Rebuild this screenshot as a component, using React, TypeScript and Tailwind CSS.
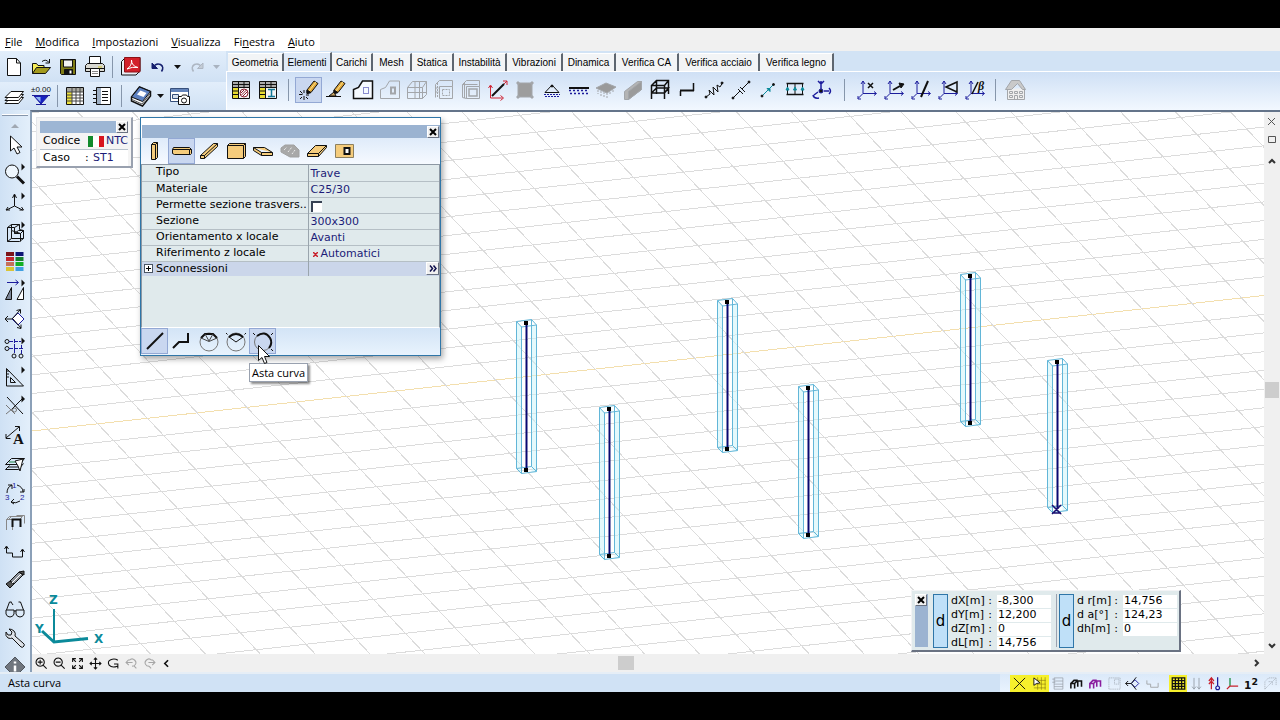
import type { ReactNode } from "react";
import { clsx } from "clsx";

const GRID = "#dcdcdc";
const NAVY = "#1c1c9c";
const TEAL = "#0b8a9a";
const GRAY = "#a3a6aa";

function Glyph({
  children,
  size = 24,
  color = "#111",
}: {
  children: ReactNode;
  size?: number;
  color?: string;
}) {
  return (
    <svg
      aria-hidden="true"
      className="block shrink-0"
      fill="none"
      height={size}
      stroke={color}
      viewBox="0 0 24 24"
      width={size}
    >
      {children}
    </svg>
  );
}

function ToolButton({
  label,
  children,
  active = false,
  className,
}: {
  label: string;
  children: ReactNode;
  active?: boolean;
  className: string;
}) {
  return (
    <button
      aria-label={label}
      aria-pressed={active}
      className={clsx(
        "flex shrink-0 items-center justify-center",
        active && "bg-[#c9d7f0] outline outline-1 -outline-offset-1 outline-[#93a8d4]",
        className
      )}
      type="button"
    >
      {children}
    </button>
  );
}

function Separator({ className }: { className: string }) {
  return (
    <span className={clsx("flex shrink-0 justify-center", className)}>
      <span className="h-[22px] w-px bg-[#8696ab]" />
    </span>
  );
}

function CloseBox({ className }: { className?: string }) {
  return (
    <button
      aria-label="Chiudi"
      className={clsx(
        "flex size-3 shrink-0 items-center justify-center border border-white border-r-gray-500 border-b-gray-500 bg-[#f0f0f0]",
        className
      )}
      type="button"
    >
      <svg fill="none" height="8" stroke="#000" strokeWidth="2" viewBox="0 0 8 8" width="8">
        <path d="M1 1l6 6M7 1l-6 6" />
      </svg>
    </button>
  );
}

const DownArrow = ({ color = "#111" }: { color?: string }) => (
  <svg className="block" fill={color} height="4" viewBox="0 0 7 4" width="7">
    <path d="M0 0h7L3.5 4z" />
  </svg>
);

/* ---------- standard toolbar ---------- */

const newIcon = (
  <Glyph>
    <path d="M5.5 3.5h9l4 4.5v12.500h-13z" fill="#fff" />
    <path d="M14.500 3.500v4.500h4" />
  </Glyph>
);
const openIcon = (
  <Glyph>
    <path d="M3.500 18.500V8.500h4l1.500 2h6v3" fill="#f6ee5a" />
    <path d="M3.500 18.500l4-6h14l-5 6z" fill="#a39a1c" />
    <path d="M13 6.500q4-3 7 1M20.500 4v4h-4" />
  </Glyph>
);
const saveIcon = (
  <Glyph>
    <path d="M4.500 4.500h15v15h-14l-1-1z" fill="#7f7c14" />
    <path d="M7.500 5h9v7h-9z" fill="#f3f3ef" />
    <path d="M8.500 14.500h8v5h-8z" fill="#111" />
    <path d="M13.500 15.500h2v3h-2z" fill="#fff" stroke="none" />
  </Glyph>
);
const printIcon = (
  <Glyph>
    <path d="M6.500 10V1.500h11V10" fill="#fff" />
    <path d="M2.500 10.500l2-2h15l2 2v6h-19z" fill="#d9d9d2" />
    <path d="M3 13.500h18" />
    <path d="M7.500 13.500h9v8h-9z" fill="#fff" />
    <path d="M9 16.500h6M9 18.500h6" stroke="#888" />
    <path d="M15 12h4" stroke="#c9c224" />
  </Glyph>
);
const pdfIcon = (
  <Glyph>
    <path d="M2.500 6.500l4-4h14.500v13.500l-4 4H2.500z" fill="#e9eef5" />
    <path d="M5.500 2.500h15.500v14.500H5.500z" fill="#d3202a" stroke="#8c1218" />
    <path d="M8 14q5-3 4.500-9q0 6 6.500 7.500q-6-1-11 1.500z" stroke="#fff" />
  </Glyph>
);
const undoIcon = (
  <Glyph color="#16206e">
    <path d="M7 12.500q3-5 7.500-3q4 2.500 1 7" strokeWidth="1.500" />
    <path d="M6 8v5.500h5.500z" fill="#16206e" />
  </Glyph>
);
const redoIcon = (
  <Glyph color="#adb6c2">
    <path d="M17 12.500q-3-5-7.500-3q-4 2.500-1 7" strokeWidth="1.500" />
    <path d="M18 8v5.500h-5.500z" fill="#c4ccd6" />
  </Glyph>
);
const layersIcon = (
  <Glyph>
    <path d="M3 19.500l6-6h12.500l-5 6z" fill="#fff" />
    <path d="M3 16.500l6-6h12.500l-5 6z" fill="#fff" />
    <path d="M3 13.500l6-6h12.500l-5 6z" fill="#fff" />
  </Glyph>
);
const levelIcon = (
  <Glyph>
    <text fill="#111" fontFamily="Liberation Sans" fontSize="8" stroke="none" x="2" y="8">
      ±0.00
    </text>
    <path d="M3 11.500h18M7 20.500h10" stroke={NAVY} />
    <path d="M5 12h14l-7 8z" fill="#1622c4" stroke={NAVY} />
    <path d="M6.500 13h5v5z" fill="#8fb6f0" stroke="none" />
  </Glyph>
);
const tableIcon = (
  <Glyph>
    <path d="M3.500 3.500h17v17h-17z" fill="#fff" />
    <path d="M4 4h16v4H4z" fill="#a8a8a0" stroke="none" />
    <path d="M4 8h5v12H4z" fill="#eee23c" stroke="none" />
    <path d="M3.500 8h17M3.500 11h17M3.500 14h17M3.500 17h17M9 3.500v17M13 3.500v17M17 3.500v17" stroke="#444" />
  </Glyph>
);
const notebookIcon = (
  <Glyph>
    <path d="M6.500 3.500h14v17h-14z" fill="#fff" />
    <path d="M7 4h4v16h-4z" fill="#9fb0c4" stroke="none" />
    <path d="M3 6.500h4M3 10.500h4M3 14.500h4M3 18.500h4M12 7.500h6M12 10.500h6M12 13.500h6M12 16.500h6" />
  </Glyph>
);
const bookIcon = (
  <Glyph>
    <path d="M2.500 13l8-10 11 4.500v4.500l-8 10-11-5z" fill="#fff" strokeWidth="1.500" />
    <path d="M2.500 13l8-10 11 4.500-8 10z" fill="#5c80c0" />
    <path d="M8 10.500l3.500-4 6 2.500-3 4z" fill="#fff" stroke="none" />
    <path d="M3 15.500l10 4.500 8-10" stroke="#555" />
  </Glyph>
);
const snapshotIcon = (
  <Glyph>
    <path d="M2.500 4.500h18v13h-18z" fill="#fff" stroke="#37507c" />
    <path d="M3 5h17v3H3z" fill="#6384bb" stroke="none" />
    <path d="M4.500 10.500h6v4h-6z" fill="#d5e0ef" stroke="#37507c" />
    <path d="M10.500 12.500h3l1-1.500h4l1 1.500h2v8h-11z" fill="#fff" />
    <circle cx="16" cy="16.500" r="2.500" />
  </Glyph>
);

/* ---------- "Elementi" toolbar ---------- */

const sheetBase = (
  <>
    <path d="M3.500 3.500h17v17h-17z" fill="#f4f4f4" />
    <path d="M4 4h16v5H4z" fill="#aaa" stroke="none" />
    <path d="M4 9h5v11H4z" fill="#e8dc32" stroke="none" />
    <path d="M3.500 6.500h17M3.500 9.500h17M3.500 13h6M3.500 16.500h6M9.500 3.500v17M15 3.500v6" />
  </>
);

const axes = (
  <path d="M2 20.500l5-5V3M7 15.500h13M5 6l2-3 2 3M18 13.500l2.500 2-2.500 2M2 18v3h3" stroke={NAVY} />
);

const pencil = (
  <>
    <path d="M10 12l7-9 4 2.500-7 9-4 1z" fill="#e2a83a" />
    <path d="M12 13l7-9" stroke="#f8e28c" />
    <path d="M10 12v3.500l4-1z" fill="#111" />
  </>
);

const sheetHatchIcon = (
  <Glyph>
    {sheetBase}
    <circle cx="15" cy="15" fill="#fff" r="4" stroke="#8c2030" />
    <path d="M12.500 17l5-5M14 18l4-4M12 15l3-3" stroke="#8c2030" />
  </Glyph>
);
const sheetBeamIcon = (
  <Glyph>
    {sheetBase}
    <path d="M12 11.500h7M12 18.500h7M15.500 11.500v7" stroke="#147898" strokeWidth="1.500" />
  </Glyph>
);
const drawIcon = (
  <Glyph>
    {pencil}
    <path d="M7 12v3M7 18v4M2 16.500h3.500M9 17h3M3 13l2.500 2.500M9 19l2 2M5 19l-2 2" />
  </Glyph>
);
const editIcon = (
  <Glyph>
    {pencil}
    <path d="M2 18.500h15M5 18l5-4 2 4z" fill="#c9a460" />
  </Glyph>
);
const shapeIcon = (
  <Glyph>
    <path d="M2.500 20.500v-9l5-2 4-6.500h10v17.500z" fill="#f6faff" strokeWidth="1.500" />
    <path d="M12.500 9.500h5v6h-5z" stroke={NAVY} strokeDasharray="1 1" />
  </Glyph>
);
const shapeHoleIcon = (
  <Glyph color={GRAY}>
    <path d="M2.500 20.500v-9l5-2 4-6.500h10v17.500z" />
    <path d="M13 9.500h4v6h-4z" strokeWidth="2" />
  </Glyph>
);
const splitIcon = (
  <Glyph color={GRAY}>
    <path d="M2.500 9.500h15v11h-15zM7.500 3.500h14v13M2.500 9.500l5-6M17.500 9.500l4-6M17.500 20.500l4-4M10 3v17M3 14.500h18M14.500 4v16" />
  </Glyph>
);
const solidDotIcon = (
  <Glyph color={GRAY}>
    <path d="M7.500 8.500h13v12h-13zM3.500 6.500l4-4h13v6M3.500 6.500v13" />
    <path d="M10.500 11.500h7v6h-7zM5.500 5v15M3.500 10h4M3.500 14h4" strokeDasharray="2 1" />
  </Glyph>
);
const solidIcon = (
  <Glyph color={GRAY}>
    <path d="M7.500 8.500h13v12h-13zM3.500 6.500l4-4h13v6M3.500 6.500v13l4 1M5.500 5v15M3.500 6.500h15" />
    <path d="M10 11h8v7h-8z" strokeWidth="1.500" />
  </Glyph>
);
const lineAxesIcon = (
  <Glyph>
    <path d="M6 18L18 6" strokeWidth="2" />
    <path d="M17 3h4v4M21 3l-3 3M4.500 8v12h12M2.500 10l2-3 2 3M14.500 17.500l3 2.500-3 2.500" stroke="#cf2435" />
  </Glyph>
);
const patchIcon = (
  <Glyph color={GRAY}>
    <path d="M5 5h14v14H5z" fill="#9d9d9d" />
    <path d="M4 4h2v2H4zM18 4h2v2h-2zM4 18h2v2H4zM18 18h2v2h-2z" fill={GRAY} />
  </Glyph>
);
const supportIcon = (
  <Glyph>
    <path d="M5 14.500h14L12 7z" />
    <circle cx="12" cy="8" fill="#111" r="1" />
    <path d="M4 16.500h16M5 18.500h14" stroke={NAVY} strokeDasharray="2 1" />
  </Glyph>
);
const lineSupportIcon = (
  <Glyph>
    <path d="M2 10h20" strokeWidth="2" />
    <path d="M2 12.500h20M3 15.500h19" stroke={NAVY} strokeDasharray="2 2" strokeWidth="1.500" />
  </Glyph>
);
const surfaceIcon = (
  <Glyph color={GRAY}>
    <path d="M2 10l10-5 10 4-9 6z" fill="#9a9a9a" />
    <path d="M4 12v4M7 13v5M10 14v5M13 15v5M16 14v3M19 12v3" strokeDasharray="2 1" />
  </Glyph>
);
const wallIcon = (
  <Glyph color={GRAY}>
    <path d="M3.500 13.500l13-10h4v8l-13 10h-4z" fill="#b4b4b4" />
    <path d="M7.500 13.500l13-10v8l-13 10z" fill="#9b9b9b" />
  </Glyph>
);
const frameIcon = (
  <Glyph>
    <path d="M3.500 21V7.500l5-5h12V16M16.500 21V7.500M8.500 2.500V16M3.500 7.500h13l4-5M3.500 15h13l4-5h-12l-5 5" strokeWidth="1.500" />
  </Glyph>
);
const offsetIcon = (
  <Glyph>
    <path d="M5 12.500h14" strokeWidth="2" />
    <path d="M5.500 13v5M18.500 5v8" strokeWidth="1.500" />
  </Glyph>
);
const springIcon = (
  <Glyph>
    <path d="M4 19l4-3-1-4 5 5-1-8 5 5-1-7 3 2 3-5" />
    <circle cx="4" cy="19" fill="#111" r="1" />
    <circle cx="20" cy="5" fill="#111" r="1" />
  </Glyph>
);
const gapIcon = (
  <Glyph>
    <path d="M4 20l7-7M13 11l7-7M9 11l5 5M11 9l5 5" />
    <circle cx="4" cy="20" fill="#111" r="1" />
    <circle cx="20" cy="4" fill="#111" r="1" />
  </Glyph>
);
const linkIcon = (
  <Glyph>
    <path d="M6 18L17 7" stroke={TEAL} />
    <path d="M11 10.500h3v3z" fill={TEAL} stroke={TEAL} />
    <circle cx="6" cy="18" fill="#111" r="1" />
    <circle cx="17.500" cy="6.500" fill="#111" r="1" />
  </Glyph>
);
const loadGridIcon = (
  <Glyph>
    <path d="M3.500 5.500h17M3.500 16.500h17" strokeWidth="1.500" />
    <path d="M4.500 5v12M12 5v12M19.500 5v12" />
    <path d="M3 12l1.500-3L6 12zM10.500 12l1.500-3 1.500 3zM18 12l1.500-3 1.500 3z" fill={TEAL} stroke={TEAL} />
  </Glyph>
);
const massIcon = (
  <Glyph color={NAVY}>
    <circle cx="11" cy="13" fill="#111" r="2" />
    <path d="M11 3v8M8 3l3 3 3-3M14 13h5M19 10q3 3 0 6M8 14l-4 3M3 17q1 4 6 3" strokeWidth="1.500" />
  </Glyph>
);
const axisXIcon = (
  <Glyph>
    {axes}
    <path d="M12 5l5 5M17 5l-5 5" strokeWidth="1.500" />
  </Glyph>
);
const axisArrowIcon = (
  <Glyph>
    {axes}
    <path d="M10 12l7-4" strokeWidth="2" />
    <path d="M16 5l5 1-3 4z" fill="#111" />
  </Glyph>
);
const axisLineIcon = (
  <Glyph>
    {axes}
    <path d="M11 19l7-16" strokeWidth="2" />
  </Glyph>
);
const axisPlaneIcon = (
  <Glyph>
    {axes}
    <path d="M9 9l11-5v10z" strokeWidth="1.500" />
  </Glyph>
);
const axisBetaIcon = (
  <Glyph>
    {axes}
    <path d="M8 16l6-12" strokeWidth="1.500" />
    <text fill="#111" fontFamily="Liberation Serif" fontSize="12" fontStyle="italic" fontWeight="bold" stroke="none" x="14" y="12">
      β
    </text>
  </Glyph>
);
const buildingIcon = (
  <Glyph color={GRAY}>
    <path d="M4.500 11v10.500h17V10" fill="#efefef" />
    <path d="M2.500 11.500l6-9h8l6 9h-3l-5-6-6 6z" fill="#c9c9c9" />
    <path d="M6.500 13.500h3v2h-3zM11.500 13.500h3v2h-3zM16.500 13.500h3v2h-3zM6.500 17.500h3v2h-3zM11.500 17.500h3v4h-3zM16.500 17.500h3v2h-3z" />
  </Glyph>
);

const elementTools: { label: string; icon: ReactNode; active?: boolean }[] = [
  { label: "Disegna", icon: drawIcon, active: true },
  { label: "Modifica elemento", icon: editIcon },
  { label: "Contorno", icon: shapeIcon },
  { label: "Foro", icon: shapeHoleIcon },
  { label: "Dividi", icon: splitIcon },
  { label: "Solaio tratteggiato", icon: solidDotIcon },
  { label: "Solaio", icon: solidIcon },
  { label: "Asse locale", icon: lineAxesIcon },
  { label: "Area", icon: patchIcon },
  { label: "Vincolo", icon: supportIcon },
  { label: "Vincolo lineare", icon: lineSupportIcon },
  { label: "Vincolo superficiale", icon: surfaceIcon },
  { label: "Parete", icon: wallIcon },
  { label: "Telaio", icon: frameIcon },
  { label: "Offset", icon: offsetIcon },
  { label: "Molla", icon: springIcon },
  { label: "Gap", icon: gapIcon },
  { label: "Link", icon: linkIcon },
  { label: "Impalcato", icon: loadGridIcon },
  { label: "Massa", icon: massIcon },
];

const axisTools = [
  { label: "Asse x", icon: axisXIcon },
  { label: "Asse vettore", icon: axisArrowIcon },
  { label: "Asse linea", icon: axisLineIcon },
  { label: "Asse piano", icon: axisPlaneIcon },
  { label: "Angolo beta", icon: axisBetaIcon },
];

const tabs = [
  { label: "Geometria", width: "w-14" },
  { label: "Elementi", width: "w-12", active: true },
  { label: "Carichi", width: "w-[41px]" },
  { label: "Mesh", width: "w-[39px]" },
  { label: "Statica", width: "w-[42px]" },
  { label: "Instabilità", width: "w-[53px]" },
  { label: "Vibrazioni", width: "w-14" },
  { label: "Dinamica", width: "w-[53px]" },
  { label: "Verifica CA", width: "w-[63px]" },
  { label: "Verifica acciaio", width: "w-[81px]" },
  { label: "Verifica legno", width: "w-[74px]" },
];

/* ---------- left toolbar ---------- */

const flyout = <path d="M18.500 1.500v7l3.500-3.500z" fill="#111" stroke="none" />;

const sideTools: { label: string; icon: ReactNode }[] = [
  {
    label: "Seleziona",
    icon: <path d="M7.500 3v15l3.500-3 3 6 3-1.500-3-5.500h5z" fill="#fff" />,
  },
  {
    label: "Zoom",
    icon: (
      <>
        <circle cx="9" cy="9.500" fill="#eef6fd" r="6.500" />
        <path d="M14 14.500l7 7" strokeWidth="3" />
        {flyout}
      </>
    ),
  },
  {
    label: "Viste",
    icon: (
      <>
        <path d="M11.500 15V4M9.500 7l2-4 2 4M11.500 15l-8 4M11.500 15l8 4M7 19H3l2-3M16.500 19h4l-2-3" />
        {flyout}
      </>
    ),
  },
  {
    label: "Parti",
    icon: (
      <>
        <path d="M4.500 7.500l4-3h8v5l4 1v8l-4 3h-12zM4.500 7.500h7v6h6v8M8.500 4.500v6l9 3 3-3M8.500 10.500v8h12M4.500 21.500l4-3M11.500 7.500l5-3M11.500 13.500l4-3h5" />
        {flyout}
      </>
    ),
  },
  {
    label: "Colori",
    icon: (
      <g stroke="none">
        <path d="M3 3h8v4H3z" fill="#7c1418" />
        <path d="M12.500 3h8v4h-8z" fill="#0c1474" />
        <path d="M3 8h8v4H3z" fill="#c3272d" />
        <path d="M12.500 8h8v4h-8z" fill="#18802c" />
        <path d="M3 13h8v4H3z" fill="#c4705c" />
        <path d="M12.500 13h8v4h-8z" fill="#12b024" />
        <path d="M3 18h8v4H3z" fill="#d9c436" />
        <path d="M12.500 18h8v4h-8z" fill="#3f9fe0" />
      </g>
    ),
  },
  {
    label: "Specchia",
    icon: (
      <>
        <path d="M4 4.500h11M12.500 2l3 2.500-3 2.500" stroke={NAVY} />
        <path d="M8.500 9.500v12h-6z" fill="#7c8698" />
        <path d="M20.500 9.500v12h-6.500z" fill="#fff" />
        {flyout}
      </>
    ),
  },
  {
    label: "Ruota",
    icon: (
      <>
        <path d="M9 12l6-6 6 6-6 6z" fill="#fff" stroke={NAVY} />
        <path d="M9 12H2M5 9l-3 3 3 3M9 12l8-9M13.500 3.500l4-1v4M10 12l8 9M14 20.500l4 1v-4" />
      </>
    ),
  },
  {
    label: "Griglia",
    icon: (
      <>
        <circle cx="4" cy="5.500" r="2" />
        <circle cx="4" cy="12.500" r="2" />
        <circle cx="11" cy="20" r="2" />
        <circle cx="18" cy="20" r="2" />
        <path d="M6 5.500h12M6 12.500h15M11.500 3v15M18.500 9v9" stroke={NAVY} strokeDasharray="4 1" />
        {flyout}
      </>
    ),
  },
  {
    label: "Squadra",
    icon: (
      <>
        <path d="M3.500 3.500v17.500h17z" />
        <path d="M7.500 12.500v5h5z" />
        <path d="M4 6h2M4 9h2M4 12h2" />
        {flyout}
      </>
    ),
  },
  {
    label: "Intersezione",
    icon: (
      <>
        <path d="M4 3l16 17M9 15L20 4" />
        <path d="M3 11l9 9M3 20l6-5" stroke="#777" />
        <circle cx="11.500" cy="16" r="2" stroke="#777" />
        {flyout}
      </>
    ),
  },
  {
    label: "Quote",
    icon: (
      <>
        <path d="M3 15L16 4M3 11v4.500h4.500M12 3.500h4.500V8" />
        <text fill="#111" fontFamily="Liberation Serif" fontSize="15" fontWeight="bold" stroke="none" x="10" y="21">
          A
        </text>
      </>
    ),
  },
  {
    label: "Piani di lavoro",
    icon: (
      <>
        <path d="M2.500 12.500l6-6h13l-5 6zM2.500 17.500l4-4M2.500 17.500h13l5-6M5 15h13" />
        <path d="M6 10h13" stroke="#238644" />
        <path d="M12 9l8-2-3 12-2-5z" fill="#fff" />
      </>
    ),
  },
  {
    label: "Rinumera",
    icon: (
      <>
        <path d="M4 12q0-6 5-8M14 4q6 2 6 7M17 20q-4 3-9 1M5 4h4v4M17 11h4V8M11 18l-3 3 3 2" />
        <g fill={NAVY} fontFamily="Liberation Sans" fontSize="8" stroke="none">
          <text x="9" y="7">1</text>
          <text x="2" y="19">3</text>
          <text x="17" y="19">2</text>
        </g>
      </>
    ),
  },
  {
    label: "Parti strutturali",
    icon: (
      <>
        <path d="M3.500 20V9.500h6V20M6 9l3-3M3.500 9.500l3-3h13l-3 3M13.500 5.500h8v8" stroke="#888" />
        <path d="M9.500 17V9.500h8V17" strokeWidth="2" />
      </>
    ),
  },
  {
    label: "Percorso",
    icon: <path d="M3.500 8v6h6v4h10v-7M1.500 10l2-3 2 3M17.500 13l2-3 2 3" />,
  },
  {
    label: "Evidenzia",
    icon: (
      <>
        <path d="M7 13l9-9 4 3-9 9z" fill="#8e949c" />
        <path d="M16 4l5-1v4zM3 16l4-3 4 3-4 4z" fill="#555" />
        <path d="M9 15L18 6" stroke="#fff" />
      </>
    ),
  },
  {
    label: "Occhiali",
    icon: (
      <path d="M3 13h8v4q-1 3-4 3t-4-3zM13 13h8v4q-1 3-4 3t-4-3zM11 14h2M3.500 13l3-8h2M20.500 13l-3-8h-2M8 5l2 3" />
    ),
  },
  {
    label: "Opzioni",
    icon: (
      <path d="M6 3l3 3-1 3-3 0-2-3q-1 4 2 6 3 1 4 0l9 9q2 1 3-1t-1-3l-8-7q1-3-1-5T6 3z" fill="#dfe4ea" />
    ),
  },
  {
    label: "Informazioni",
    icon: (
      <>
        <path d="M12 2l10 10-10 10L2 12z" fill="#70767e" stroke="#50565e" />
        <path d="M12 10.500v6M12 6.500v2" stroke="#fff" strokeWidth="2.500" />
      </>
    ),
  },
];

/* ---------- model view ---------- */

const shallowLines = Array.from({ length: 38 }, (_, i) => 431 + (i - 18) * 18.72);
const steepLines = Array.from({ length: 33 }, (_, i) => 462 + (i - 18) * 54.9);

const columns = [
  { x: 526, y: 323 },
  { x: 609, y: 409 },
  { x: 727, y: 302 },
  { x: 808, y: 388 },
  { x: 970, y: 276 },
  { x: 1057, y: 362, origin: true },
];

function Column({ x, y, origin = false }: { x: number; y: number; origin?: boolean }) {
  return (
    <g transform={`translate(${x} ${y})`}>
      <path d="M-9.500-1.500V146.500l5 5V3.500zM5.500 2.500v147h5V3z" fill="#c9f3fa" fillOpacity="0.500" />
      <path
        d="M-9.500-1.500l15-2 5 5.500-15 2zM-9.500-1.500v147l5 5 15-2V2M-4.500 3.500v147M5.500-3.500v147l5 5M-9.500 145.500l15-2"
        fill="none"
        stroke="#62b6d8"
      />
      <path d="M.5 0v147" stroke="#080870" strokeWidth="2" />
      <path d="M-2-2h4v4h-4z" fill="#000" />
      {origin ? (
        <path d="M-5 143l9 9M4 143l-9 9M-5 151h9" fill="none" stroke="#1a0f70" strokeWidth="1.500" />
      ) : (
        <path d="M-2 145h4v4h-4z" fill="#000" />
      )}
    </g>
  );
}

function ModelView() {
  return (
    <svg
      aria-label="Modello"
      className="absolute inset-0 size-full bg-white"
      preserveAspectRatio="xMinYMin slice"
      role="img"
      viewBox="32 112 1232 542"
    >
      <g shapeRendering="crispEdges">
        {shallowLines.map((y, i) => (
          <line key={y} stroke={i === 18 ? "#f3dfae" : GRID} x1={32} x2={1264} y1={y} y2={y - 135.5} />
        ))}
        {steepLines.map((x) => (
          <line key={x} stroke={GRID} x1={x} x2={x + 512} y1={112} y2={654} />
        ))}
      </g>
      {columns.map((c) => (
        <Column key={c.x} {...c} />
      ))}
      <g fill="none" stroke={TEAL} strokeWidth="2">
        <path d="M54 609v32" />
        <path d="M42 631l12 11 34-3.500" strokeWidth="3" />
      </g>
      <g fill={TEAL} fontFamily="DejaVu Sans" fontSize="12" fontWeight="bold">
        <text x="49" y="604">Z</text>
        <text x="35" y="633">Y</text>
        <text x="94" y="643">X</text>
      </g>
    </svg>
  );
}

/* ---------- floating panels ---------- */

function InfoPanel() {
  return (
    <section className="absolute top-[5px] left-1 w-[97px] border border-gray-200 border-r-2 border-r-gray-400 border-b-2 border-b-gray-400 bg-[#f4f4f4] px-[3px] pt-[3px] text-[11px] leading-4">
      <div className="flex bg-[#9db6d4]">
        <CloseBox className="ml-auto" />
      </div>
      <div className="flex items-center border-[#b9c3cc] border-b pl-[3px]">
        <span className="w-[45px]">Codice</span>
        <svg className="h-[11px] w-4" viewBox="0 0 16 11">
          <path d="M0 0h5v11H0z" fill="#118a2c" />
          <path d="M5 0h6v11H5z" fill="#fff" />
          <path d="M11 0h5v11h-5z" fill="#d8141c" />
        </svg>
        <span className="pl-0.5 text-[#1c1c78]">NTC</span>
      </div>
      <div className="flex bg-white pl-[3px]">
        <span className="w-[42px]">Caso</span>
        <span className="w-2">:</span>
        <span className="text-[#1c1c78]">ST1</span>
      </div>
    </section>
  );
}

const solid = "#f5cc7c";

const elementTypes = [
  { label: "Pilastro", icon: <path d="M8.500 5.500l2-2h4v15l-2 2h-4zM8.500 5.500h4v15M12.500 5.500l2-2" fill={solid} /> },
  { label: "Trave", active: true, icon: <path d="M2.500 10.500l1-2h16l2 2v4l-1 1h-16l-2-1zM2.500 10.500h17v5M19.500 10.500l2 0" fill={solid} /> },
  { label: "Trave inclinata", icon: <path d="M3.500 16.500l13-12h4v3l-13 12h-4zM3.500 16.500h4v3M7.500 16.500l13-12" fill={solid} /> },
  { label: "Parete", icon: <path d="M3.500 6.500l2-2h16v13l-2 2h-16zM3.500 6.500h16v13M19.500 6.500l2-2" fill={solid} /> },
  { label: "Soletta", icon: <path d="M2.500 8.500h11l8 5v3h-11l-8-5zM2.500 8.500l8 5h11M10.500 13.500v3" fill={solid} /> },
  {
    label: "Pendio",
    icon: (
      <>
        <path d="M3 9l4-3h9l5 5v7h-9l-9-5z" fill="#a8a8a8" stroke="#a0a0a0" />
        <path d="M6 11l3-3M10 13l4-5M14 15l3-4" stroke="#fff" strokeDasharray="1 1" />
      </>
    ),
  },
  { label: "Falda", icon: <path d="M2.500 14.500l8-8h11v2l-8 9h-11zM2.500 14.500h11v3M13.500 14.500l8-8" fill={solid} /> },
  {
    label: "Apertura",
    icon: (
      <>
        <path d="M3.500 5.500h18v13h-18z" fill={solid} stroke="#8c8060" />
        <path d="M12.500 9h5v6h-5z" fill="#fff" strokeWidth="2" />
      </>
    ),
  },
];

const drawModes = [
  { label: "Asta", active: true, icon: <path d="M4 20L20 4" strokeWidth="2" /> },
  { label: "Polilinea", icon: <path d="M3 19l6-6h9V4" strokeWidth="2" /> },
  {
    label: "Poligono",
    icon: (
      <>
        <circle cx="12" cy="13" r="9" stroke="#777" />
        <path d="M4 9l4-4h8l4 4" strokeWidth="2" />
        <path d="M4 9l8 3.500 8-3.500M8 5l4 7 4-7" stroke="#444" />
      </>
    ),
  },
  {
    label: "Arco",
    icon: (
      <>
        <circle cx="12" cy="13" r="9" stroke="#777" />
        <path d="M5 8q7-6 14 0" strokeWidth="2" />
        <path d="M5 8l7 5 7-5M2 4l1.500 1.500M22 4l-1.500 1.500" />
      </>
    ),
  },
  {
    label: "Asta curva",
    active: true,
    icon: (
      <>
        <circle cx="12" cy="13" r="8.500" stroke="#777" />
        <path d="M6 7q8-6 13 2q3 5-1 10" strokeWidth="2" />
        <path d="M2 4l2 2M22 4l-2 2M22 22l-2-2" />
      </>
    ),
  },
];

const properties: { name: string; value: ReactNode }[] = [
  { name: "Tipo", value: "Trave" },
  { name: "Materiale", value: "C25/30" },
  {
    name: "Permette sezione trasvers..",
    value: (
      <input
        aria-label="Permette sezione trasversale"
        className="block size-[11px] appearance-none border-gray-700 border-t-2 border-l-2 bg-white"
        type="checkbox"
      />
    ),
  },
  { name: "Sezione", value: "300x300" },
  { name: "Orientamento x locale", value: "Avanti" },
  {
    name: "Riferimento z locale",
    value: (
      <span className="flex items-center gap-[3px] pl-0.5">
        <svg fill="none" height="5" stroke="#c8202c" strokeWidth="1.500" viewBox="0 0 5 5" width="5">
          <path d="M0 0l5 5M5 0l-5 5" />
        </svg>
        Automatici
      </span>
    ),
  },
];

function PropertiesPanel() {
  return (
    <section className="absolute top-[5px] left-[108px] w-[301px] border border-[#2f76a8] bg-white pt-[7px] shadow-[2px_3px_6px_rgba(0,0,0,0.35)]">
      <div className="ml-px flex h-[13px] items-center bg-[#9bb3d1] pr-px">
        <CloseBox className="ml-auto" />
      </div>
      <div className="flex h-[26px] bg-linear-to-b from-[#dfebfa] to-[#f6faff]">
        {elementTypes.map((t) => (
          <ToolButton active={t.active} className="h-[26px] w-[27px]" key={t.label} label={t.label}>
            <Glyph>{t.icon}</Glyph>
          </ToolButton>
        ))}
      </div>
      <div className="h-[164px] border border-[#8d98a3] border-b-white bg-[#e0eaec]">
        <table className="w-full table-fixed border-collapse text-[11px] leading-[14px]">
          <tbody>
            {properties.map((p) => (
              <tr className="h-4 border-[#b5bfc5] border-b" key={p.name}>
                <th className="w-[166px] whitespace-nowrap border-[#9aa5ad] border-r p-0 pl-3.5 text-left align-top font-normal" scope="row">
                  {p.name}
                </th>
                <td className="p-0 pl-0.5 text-[#1c1c78] align-bottom">
                  <div className="flex h-[13px] items-center">{p.value}</div>
                </td>
              </tr>
            ))}
            <tr className="h-[15px] bg-[#cbd6ea]">
              <th className="border-[#9aa5ad] border-r p-0 text-left align-top font-normal" scope="row">
                <span className="flex items-center gap-[3px] pl-0.5">
                  <button
                    aria-label="Espandi"
                    className="flex size-[9px] items-center justify-center border border-gray-600 bg-white"
                    type="button"
                  >
                    <svg className="block" height="5" stroke="#000" viewBox="0 0 5 5" width="5">
                      <path d="M0 2.500h5M2.500 0v5" />
                    </svg>
                  </button>
                  Sconnessioni
                </span>
              </th>
              <td className="p-0">
                <button
                  aria-label="Altro"
                  className="ml-auto flex h-[13px] w-[13px] items-center justify-center border border-white border-r-gray-500 border-b-gray-500 bg-[#f0f0f0]"
                  type="button"
                >
                  <svg fill="none" height="7" stroke="#10104c" strokeWidth="1.500" viewBox="0 0 8 7" width="8">
                    <path d="M1 .5l2.500 3-2.500 3M4.500.5l2.500 3-2.500 3" />
                  </svg>
                </button>
              </td>
            </tr>
          </tbody>
        </table>
      </div>
      <div className="flex h-[27px] bg-linear-to-b from-[#d3e4f6] to-[#e8f3fd]">
        {drawModes.map((m) => (
          <ToolButton active={m.active} className="h-[26px] w-[27px]" key={m.label} label={m.label}>
            <Glyph>{m.icon}</Glyph>
          </ToolButton>
        ))}
      </div>
    </section>
  );
}

function CoordinateGroup({ fields }: { fields: { id: string; label: string; value: string }[] }) {
  return (
    <>
      <button
        className="flex h-[54px] w-[15px] items-center justify-center border border-[#2f76a8] bg-[#bfe0f8] text-[15px] leading-4"
        type="button"
      >
        d
      </button>
      <div className="pl-[3px]">
        {fields.map((f) => (
          <div className="flex h-3.5 items-center" key={f.id}>
            <label className="flex w-[46px] justify-between whitespace-pre pr-[5px]" htmlFor={f.id}>
              <span>{f.label}</span>
              <span>:</span>
            </label>
            <input className="h-[13px] w-[54px] bg-white pl-px" defaultValue={f.value} id={f.id} type="text" />
          </div>
        ))}
      </div>
    </>
  );
}

function CoordinatePanel() {
  return (
    <section className="absolute right-[83px] bottom-0.5 flex h-[62px] border border-gray-100 border-r-2 border-r-gray-500 border-b-2 border-b-gray-500 bg-[#e0eaec] py-[3px] pr-0.5 pl-[3px] text-[11px] leading-[14px]">
      <div className="mr-[5px] w-[13px] bg-[#9bb3d1]">
        <CloseBox />
      </div>
      <CoordinateGroup
        fields={[
          { id: "dx", label: "dX[m]", value: "-8,300" },
          { id: "dy", label: "dY[m]", value: "12,200" },
          { id: "dz", label: "dZ[m]", value: "0" },
          { id: "dl", label: "dL[m]", value: "14,756" },
        ]}
      />
      <span className="mr-0.5 ml-[5px] w-px bg-gray-400" />
      <CoordinateGroup
        fields={[
          { id: "dr", label: "d r[m]", value: "14,756" },
          { id: "da", label: "d a[°]", value: "124,23" },
          { id: "dh", label: "dh[m]", value: "0" },
        ]}
      />
    </section>
  );
}

/* ---------- bottom strips ---------- */

const viewTools = [
  {
    label: "Zoom avanti",
    icon: <path d="M14.500 14.500l7 7M5 9.500h9M9.500 5v9M9.500 2a7.500 7.500 0 1 0 .1 0z" strokeWidth="2" />,
  },
  {
    label: "Zoom indietro",
    icon: <path d="M14.500 14.500l7 7M5 9.500h9M9.500 2a7.500 7.500 0 1 0 .1 0z" strokeWidth="2" />,
  },
  {
    label: "Adatta",
    icon: <path d="M3 9V3h6M15 3h6v6M21 15v6h-6M9 21H3v-6M3 3l6 6M21 3l-6 6M21 21l-6-6M3 21l6-6" strokeWidth="2" />,
  },
  {
    label: "Sposta",
    icon: <path d="M12 2v20M2 12h20M9 5l3-3 3 3M9 19l3 3 3-3M5 9l-3 3 3 3M19 9l3 3-3 3" strokeWidth="2" />,
  },
  {
    label: "Ruota vista",
    icon: <path d="M20 6q-6-4-13-1t-3 10q5 6 15 2M13 13h7v8" strokeWidth="2" />,
  },
  {
    label: "Vista precedente",
    disabled: true,
    icon: <path d="M2 10h12M7 5l-5 5 5 5M8 6q5-5 10 0t-1 10l-4 1M17 17l4 4" strokeWidth="2" />,
  },
  {
    label: "Vista successiva",
    disabled: true,
    icon: <path d="M22 10H10M17 5l5 5-5 5M16 6q-5-5-10 0t1 10l4 1M11 17l4 4" strokeWidth="2" />,
  },
  { label: "Scorri a sinistra", icon: <path d="M13 6l-6 6 6 6" strokeWidth="3" /> },
];

const blocks = <path d="M3 20V12h6v8M9 12l4-4h7v9M3 12l5-5h6M14 17V9" strokeWidth="2.500" />;

const statusTools: { label: string; icon: ReactNode; width: string; on?: boolean }[] = [
  { label: "Intersezioni", width: "w-[19px]", on: true, icon: <path d="M3 3l18 18M21 3L3 21" strokeWidth="1.500" /> },
  {
    label: "Snap griglia",
    width: "w-5",
    on: true,
    icon: (
      <>
        <path d="M3 7h19M3 13h19M3 19h19M9 2v20M15 2v20M21 2v20" stroke="#8a7c10" />
        <path d="M3 3v12l4-3 6-1z" fill="#fff" strokeWidth="1.500" />
      </>
    ),
  },
  { label: "Foglio", width: "w-[18px]", icon: <path d="M5 3h14v18H5zM5 8h14M5 13h14M5 17h14M2 5h5M2 10h5" stroke="#8d949c" /> },
  { label: "Parti", width: "w-[18px]", icon: blocks },
  { label: "Parti attive", width: "w-5", icon: <g stroke="#8a1c9e">{blocks}</g> },
  { label: "Finestra", width: "w-[18px]", icon: <path d="M3 3h18v18H3zM12 5h7v8h-7z" stroke="#9aa2ac" strokeDasharray="2 1" /> },
  {
    label: "Rotazione",
    width: "w-[18px]",
    icon: (
      <>
        <path d="M10 12l6-6 6 6-6 6z" stroke={NAVY} strokeWidth="1.500" />
        <path d="M10 12H1M5 8l-4 4 4 4M10 12l8-10M10 12l8 10" strokeWidth="1.500" />
      </>
    ),
  },
  { label: "Percorso", width: "w-[22px]", icon: <path d="M3 7v6h6v5h12v-7" stroke={GRAY} strokeWidth="1.500" /> },
  { label: "Spazio", width: "w-1.5", icon: null },
  {
    label: "Griglia",
    width: "w-[18px]",
    on: true,
    icon: <path d="M2 3h20v18H2zM2 7.500h20M2 12h20M2 16.500h20M7 3v18M12 3v18M17 3v18" strokeWidth="2" />,
  },
  { label: "Carichi", width: "w-[18px]", icon: <path d="M8 3v18M16 3v18M5 17l3 4 3-4M13 17l3 4 3-4" stroke="#9aa2ac" strokeWidth="1.500" /> },
  {
    label: "Forze",
    width: "w-[18px]",
    icon: (
      <>
        <path d="M7 21V3M3 8l4-5 4 5M3 13l4-5 4 5" stroke="#c8202c" strokeWidth="2" />
        <path d="M17 2v14M17 16a3 3 0 1 0 .1 0z" stroke={NAVY} strokeWidth="2" />
      </>
    ),
  },
  {
    label: "Assi",
    width: "w-[18px]",
    icon: (
      <>
        <path d="M8 16V3" stroke="#148a3c" strokeWidth="2" />
        <path d="M8 16h13M8 16l-5 5" stroke="#c8202c" strokeWidth="2" />
      </>
    ),
  },
  {
    label: "Numerazione",
    width: "w-5",
    icon: (
      <g fill="#111" fontFamily="DejaVu Sans" fontWeight="bold" stroke="none">
        <text fontSize="17" x="0" y="20">1</text>
        <text fontSize="15" x="12" y="15">2</text>
      </g>
    ),
  },
  { label: "Dettagli", width: "w-[18px]", icon: <path d="M3 21V9l6-6h12v12M3 21L21 3M9 9h6v6" stroke="#9aa2ac" strokeDasharray="2 1" /> },
];

const menus = [
  { before: "", key: "F", after: "ile" },
  { before: "", key: "M", after: "odifica" },
  { before: "", key: "I", after: "mpostazioni" },
  { before: "", key: "V", after: "isualizza" },
  { before: "Fi", key: "n", after: "estra" },
  { before: "", key: "A", after: "iuto" },
];

function StandardToolbar() {
  return (
    <div className="flex w-[226px] shrink-0 flex-col bg-[#d6e6f7]">
      <div className="flex h-[31px] items-center bg-linear-to-b from-[#e2eefb] to-[#d0e1f4]">
        <ToolButton className="w-[27px]" label="Nuovo">{newIcon}</ToolButton>
        <ToolButton className="w-[27px]" label="Apri">{openIcon}</ToolButton>
        <ToolButton className="w-[27px]" label="Salva">{saveIcon}</ToolButton>
        <ToolButton className="w-[27px]" label="Stampa">{printIcon}</ToolButton>
        <Separator className="w-[9px]" />
        <ToolButton className="w-[27px]" label="PDF">{pdfIcon}</ToolButton>
        <ToolButton className="w-[27px]" label="Annulla">{undoIcon}</ToolButton>
        <ToolButton className="w-3" label="Elenco annulla"><DownArrow /></ToolButton>
        <ToolButton className="w-[27px]" label="Ripeti">{redoIcon}</ToolButton>
        <ToolButton className="w-3" label="Elenco ripeti"><DownArrow color="#a9b3c0" /></ToolButton>
      </div>
      <div className="flex h-7 items-center bg-linear-to-b from-[#e2eefb] to-[#d0e1f4]">
        <ToolButton className="w-[27px]" label="Piani">{layersIcon}</ToolButton>
        <ToolButton className="w-[27px]" label="Quota">{levelIcon}</ToolButton>
        <Separator className="w-[7px]" />
        <ToolButton className="w-[27px]" label="Tabelle">{tableIcon}</ToolButton>
        <ToolButton className="w-[27px]" label="Relazione">{notebookIcon}</ToolButton>
        <Separator className="w-3" />
        <ToolButton className="w-[27px]" label="Libreria">{bookIcon}</ToolButton>
        <ToolButton className="w-3" label="Elenco librerie"><DownArrow /></ToolButton>
        <ToolButton className="w-[27px]" label="Istantanea">{snapshotIcon}</ToolButton>
      </div>
    </div>
  );
}

export default function App() {
  return (
    <div className="flex h-screen flex-col overflow-hidden bg-black py-7 font-['DejaVu_Sans',sans-serif] text-black">
      <header className="shrink-0 bg-[#d2e3f5]">
        <nav className="flex h-[23px] bg-[#f0f0f0] font-['Open_Sans',sans-serif] text-[11px] leading-[28px]">
          <div className="flex gap-[13px] bg-white pr-[5px] pl-[5px]">
            {menus.map((m) => (
              <button key={m.key} type="button">
                {m.before}
                <u>{m.key}</u>
                {m.after}
              </button>
            ))}
          </div>
        </nav>
        <div className="flex h-[59px]">
          <StandardToolbar />
          <div className="flex min-w-0 flex-1 flex-col">
            <div className="flex h-5 items-end pl-0.5 font-['Liberation_Sans',sans-serif] text-[10px]" role="tablist">
              {tabs.map((t) => (
                <button
                  aria-selected={t.active ?? false}
                  className={clsx(
                    "shrink-0 whitespace-nowrap border-[#5e6670] border-r-2 border-t border-t-white",
                    t.active ? "h-[19px] bg-[#dfeaf8]" : "h-[18px] bg-[#f2f4f6]",
                    t.width
                  )}
                  key={t.label}
                  role="tab"
                  type="button"
                >
                  {t.label}
                </button>
              ))}
            </div>
            <div className="flex flex-1 items-center border-white border-t border-l bg-linear-to-b from-[#cfe0f5] to-[#f2f8ff] pb-0.5">
              <ToolButton className="w-[27px]" label="Materiali">{sheetHatchIcon}</ToolButton>
              <ToolButton className="w-[27px]" label="Sezioni">{sheetBeamIcon}</ToolButton>
              <Separator className="w-3.5" />
              {elementTools.map((t) => (
                <ToolButton active={t.active} className="h-[26px] w-[27px]" key={t.label} label={t.label}>
                  {t.icon}
                </ToolButton>
              ))}
              <Separator className="w-[19px]" />
              {axisTools.map((t) => (
                <ToolButton className="w-[27px]" key={t.label} label={t.label}>
                  {t.icon}
                </ToolButton>
              ))}
              <Separator className="w-3" />
              <ToolButton className="w-[27px]" label="Edificio">{buildingIcon}</ToolButton>
            </div>
          </div>
        </div>
      </header>

      <main className="flex min-h-0 flex-1">
        <aside className="flex w-[30px] shrink-0 flex-col overflow-hidden bg-linear-to-r from-[#cfe1f4] to-[#e3effb]">
          <div className="mx-0.5 mt-1 mb-2 h-0.5 shrink-0 border-[#8696ab] border-b bg-white" />
          <svg className="mx-auto mb-0.5 shrink-0" fill="#a0a8b2" height="4" viewBox="0 0 8 4" width="8">
            <path d="M0 4h8L4 0z" />
          </svg>
          {sideTools.map((t) => (
            <ToolButton className="h-[29px] w-[29px]" key={t.label} label={t.label}>
              <Glyph>{t.icon}</Glyph>
            </ToolButton>
          ))}
        </aside>
        <div className="flex min-w-0 flex-1 flex-col border-[#64748a] border-t-2 border-l-2 border-l-[#8ba0b8]">
          <div className="flex min-h-0 flex-1">
            <div className="relative min-w-0 flex-1 overflow-hidden">
              <ModelView />
              <InfoPanel />
              <PropertiesPanel />
              <div
                className="absolute top-[251px] left-[217px] border border-gray-400 bg-white px-0.5 font-['Open_Sans',sans-serif] text-[11px] leading-[17px] shadow-[2px_2px_2px_rgba(0,0,0,0.45)]"
                role="tooltip"
              >
                Asta curva
              </div>
              <svg className="absolute top-[233px] left-[226px]" fill="#fff" height="19" stroke="#111" viewBox="0 0 12 19" width="12">
                <path d="M.5.5v15l3.500-3 2.500 6 2.500-1-2.500-6h5z" />
              </svg>
              <CoordinatePanel />
            </div>
            <div className="flex w-4 shrink-0 flex-col items-center bg-[#f0f0f0]">
              <svg fill="none" height="540" stroke="#555" viewBox="0 0 16 540" width="16">
                <path d="M4 6l7 7M11 6l-7 7M4.500 24.500h7v6h-7z" />
                <path d="M5 51l3-3 3 3M5 532l3 3 3-3" stroke="#333" strokeWidth="2" />
                <path d="M1 270h14v16H1z" fill="#cdcdcd" stroke="none" />
              </svg>
            </div>
          </div>
          <div className="flex h-[18px] shrink-0 items-center bg-[#f0f0f0]">
            {viewTools.map((t) => (
              <ToolButton className="h-4 w-[18px]" key={t.label} label={t.label}>
                <Glyph color={t.disabled ? "#a6a6a6" : "#111"} size={13}>
                  {t.icon}
                </Glyph>
              </ToolButton>
            ))}
            <div className="flex-1">
              <div className="ml-[41%] h-3.5 w-4 bg-[#cdcdcd]" />
            </div>
            <svg className="mr-5 shrink-0" fill="none" height="8" stroke="#333" strokeWidth="2" viewBox="0 0 6 8" width="6">
              <path d="M1 1l3 3-3 3" />
            </svg>
          </div>
        </div>
      </main>

      <footer className="flex h-5 shrink-0 items-center border-[#e6eef6] border-t-2 bg-[#d0e2f5]">
        <span className="flex-1 pl-2 font-['Open_Sans',sans-serif] text-[11px] leading-4">Asta curva</span>
        <div className="flex h-full items-center bg-linear-to-b from-[#dbe9f9] to-[#e9f3fe] pr-px pl-2.5">
          {statusTools.map((t) =>
            t.icon ? (
              <button
                aria-label={t.label}
                className={clsx("flex h-[17px] items-center justify-center", t.width, t.on && "bg-[#f6f02c]")}
                key={t.label}
                type="button"
              >
                <Glyph size={15}>{t.icon}</Glyph>
              </button>
            ) : (
              <span className={t.width} key={t.label} />
            )
          )}
        </div>
      </footer>
    </div>
  );
}
